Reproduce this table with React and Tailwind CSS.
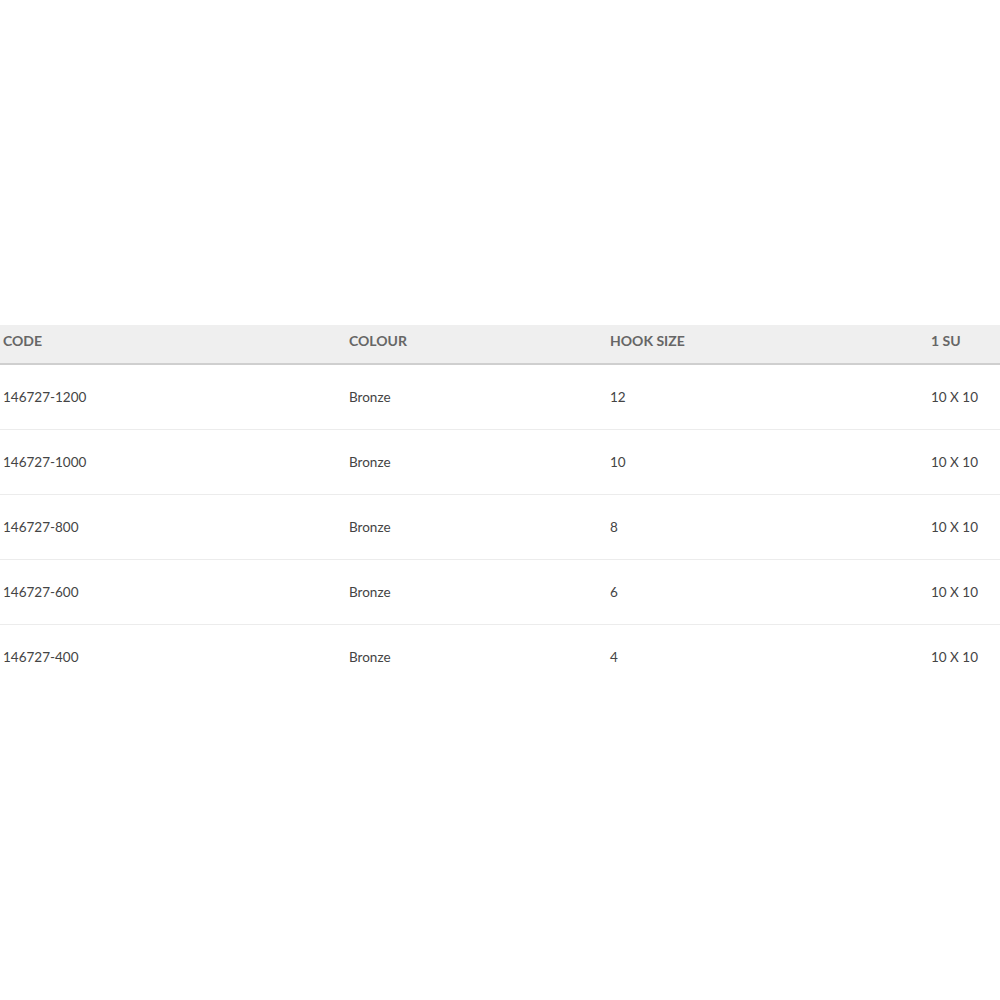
const ROWS = [
  { code: '146727-1200', colour: 'Bronze', hook: '12', su: '10 X 10' },
  { code: '146727-1000', colour: 'Bronze', hook: '10', su: '10 X 10' },
  { code: '146727-800', colour: 'Bronze', hook: '8', su: '10 X 10' },
  { code: '146727-600', colour: 'Bronze', hook: '6', su: '10 X 10' },
  { code: '146727-400', colour: 'Bronze', hook: '4', su: '10 X 10' },
];

const COLS = 'grid grid-cols-[346px_261px_321px_1fr]';

export default function App() {
  return (
    <div className="w-[1000px] h-[1000px] bg-white pt-[325px] font-['Lato','Liberation_Sans',sans-serif]">
      {/* header */}
      <div className={`${COLS} h-[40px] bg-[#efefef] border-b-2 border-[#cfcfcf] items-center text-[14px] font-bold text-[#666]`}>
        <div className="pl-[3px] pb-[7px]">CODE</div>
        <div className="pl-[3px] pb-[7px]">COLOUR</div>
        <div className="pl-[3px] pb-[7px]">HOOK SIZE</div>
        <div className="pl-[3px] pb-[7px]">1 SU</div>
      </div>

      {ROWS.map((r, i) => (
        <div
          key={r.code}
          className={`${COLS} h-[65px] items-center text-[13.5px] text-[#444] ${i < ROWS.length - 1 ? 'border-b border-[#ececec]' : ''}`}
        >
          <div className="pl-[3px]">{r.code}</div>
          <div className="pl-[3px]">{r.colour}</div>
          <div className="pl-[3px]">{r.hook}</div>
          <div className="pl-[3px]">{r.su}</div>
        </div>
      ))}
    </div>
  );
}
